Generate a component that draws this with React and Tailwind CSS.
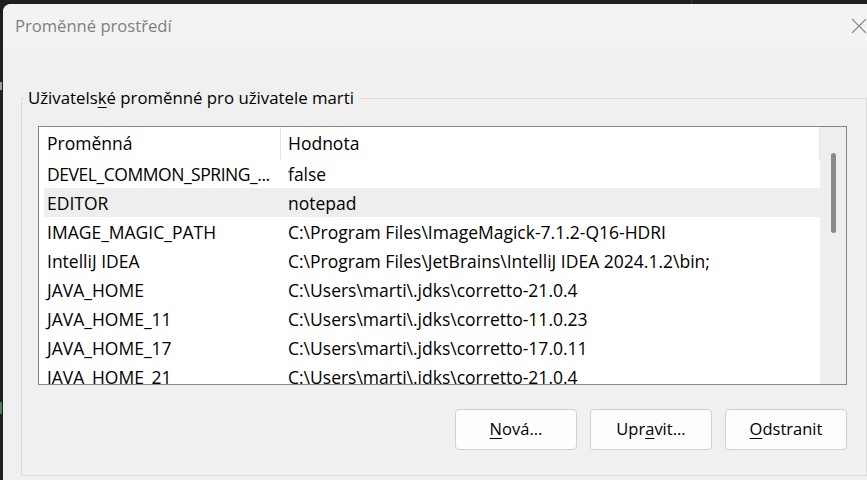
const rows = [
  ["DEVEL_COMMON_SPRING_...", "false"],
  ["EDITOR", "notepad"],
  ["IMAGE_MAGIC_PATH", "C:\\Program Files\\ImageMagick-7.1.2-Q16-HDRI"],
  ["IntelliJ IDEA", "C:\\Program Files\\JetBrains\\IntelliJ IDEA 2024.1.2\\bin;"],
  ["JAVA_HOME", "C:\\Users\\marti\\.jdks\\corretto-21.0.4"],
  ["JAVA_HOME_11", "C:\\Users\\marti\\.jdks\\corretto-11.0.23"],
  ["JAVA_HOME_17", "C:\\Users\\marti\\.jdks\\corretto-17.0.11"],
  ["JAVA_HOME_21", "C:\\Users\\marti\\.jdks\\corretto-21.0.4"],
];

const font = "font-['Open_Sans','Noto_Sans',sans-serif]";

function DialogButton({ before, mnemonic, after }) {
  return (
    <button
      type="button"
      className="w-[122px] h-[41px] rounded-[4px] bg-[#fdfdfd] border border-[#d0d0d0] text-[16.5px] text-black"
    >
      {before}
      <span className="underline underline-offset-[3px]">{mnemonic}</span>
      {after}
    </button>
  );
}

export default function App() {
  return (
    <div className={`w-[867px] h-[480px] overflow-hidden bg-[#1f1f1f] flex flex-col ${font}`}>
      <div className="h-[4px] shrink-0 flex">
        <div className="w-[691px]" />
        <div className="w-[1px] bg-[#3a3a3a]" />
      </div>
      <div className="flex flex-1 min-h-0">
        {/* strip of the desktop peeking out on the left */}
        <div className="w-[3px] shrink-0 flex flex-col">
          <div className="h-[78px]" />
          <div className="h-[8px] w-[2px] bg-[#9aa0a6]" />
          <div className="h-[312px]" />
          <div className="h-[12px] w-[2px] bg-[#4f7a55]" />
        </div>

        <div className="flex-1 flex flex-col rounded-tl-[8px] bg-[#f0f0f0] overflow-hidden">
          <div className="h-[44px] shrink-0 bg-[#f3f3f3] flex items-center justify-between pl-[12px]">
            <span className="text-[16.6px] text-[#808080]">Proměnné prostředí</span>
            <svg width="16" height="16" viewBox="0 0 16 16" className="mt-[-1px]">
              <path d="M1 1 L15 15 M15 1 L1 15" stroke="#8a8a8a" strokeWidth="1.1" fill="none" />
            </svg>
          </div>

          <div className="flex-1 pl-[18px] pt-[50px]">
            <div className="relative w-[846px] h-[378px] border border-[#dcdcdc] pl-[16px] pt-[27px]">
              <span className="absolute left-[2px] top-[-12px] px-[4px] bg-[#f0f0f0] text-[16.8px] text-black leading-[22px]">
                Uživatels<span className="underline underline-offset-[3px]">k</span>é proměnné pro uživatele marti
              </span>

              <div className="w-[809px] h-[259px] border border-[#828790] bg-white flex overflow-hidden">
                <div className="flex-1 flex flex-col">
                  <div className="h-[32px] shrink-0 flex text-[17.5px] text-black">
                    <div className="w-[242px] flex items-center pl-[8px] border-r border-[#e5e5e5]">Proměnná</div>
                    <div className="flex-1 flex items-center pl-[7px] border-r border-[#e5e5e5]">Hodnota</div>
                  </div>
                  {rows.map(([name, value], i) => (
                    <div
                      key={name}
                      className={`h-[29px] shrink-0 ml-[5px] pt-[1px] flex items-center text-[17.5px] text-black ${i === 1 ? "bg-[#eeeeee]" : ""}`}
                    >
                      <div className={`w-[237px] pl-[3px] whitespace-nowrap overflow-hidden ${i === 0 ? "tracking-[-0.45px]" : ""}`}>
                        {name}
                      </div>
                      <div className="flex-1 pl-[7px] whitespace-nowrap">{value}</div>
                    </div>
                  ))}
                </div>
                <div className="w-[26px] shrink-0 bg-[#eeeeee] flex justify-center pt-[26px]">
                  <div className="w-[5px] h-[80px] rounded-full bg-[#8a8a8a]" />
                </div>
              </div>

              <div className="flex justify-end gap-[13px] w-[809px] mt-[24px]">
                <DialogButton before="" mnemonic="N" after="ová..." />
                <DialogButton before="Upr" mnemonic="a" after="vit..." />
                <DialogButton before="" mnemonic="O" after="dstranit" />
              </div>
            </div>
          </div>
        </div>
      </div>
    </div>
  );
}
